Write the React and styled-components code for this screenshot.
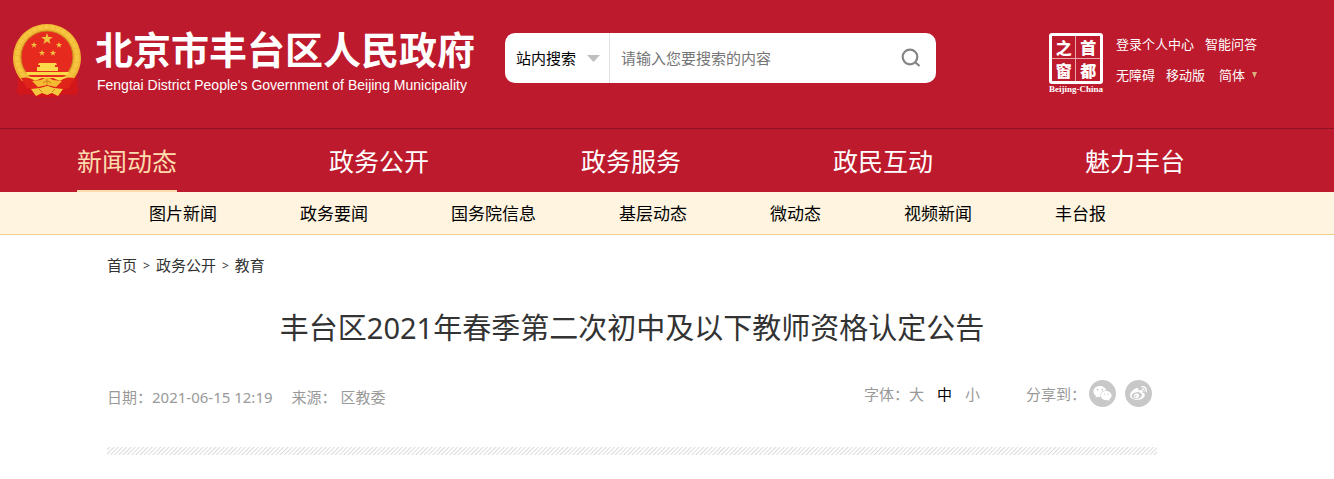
import React, { useState } from "react";
import styled, { createGlobalStyle } from "styled-components";
import { FaWeixin, FaWeibo } from "react-icons/fa";

const GlobalStyle = createGlobalStyle`
  * {
    box-sizing: border-box;
  }

  body {
    margin: 0;
    background: #fff;
    color: #333;
    font-family: "Noto Sans", "Noto Sans CJK SC", sans-serif;
    font-size: 15px;
    line-height: 24px;
  }

  a {
    color: inherit;
    text-decoration: none;
  }

  button, input, select {
    font: inherit;
  }
`;

const Header = styled.header`
  background: #bd1a2d;
  color: #fff;
`;

const HeaderTop = styled.div`
  display: flex;
  align-items: flex-start;
  height: 128px;
  padding: 24px 77px 0 12px;
`;

const Brand = styled.a`
  display: flex;
  flex: none;
  width: 493px;
`;

const BrandText = styled.div`
  margin-left: 12px;
  white-space: nowrap;
`;

const BrandName = styled.div`
  font-family: "Noto Sans CJK SC", sans-serif;
  font-size: 38px;
  font-weight: 700;
  line-height: 48px;
`;

const BrandSub = styled.div`
  padding-left: 2px;
  font-family: "Liberation Sans", sans-serif;
  font-size: 14px;
  line-height: 26px;
`;

const Search = styled.form`
  display: flex;
  align-items: center;
  width: 431px;
  height: 50px;
  margin-top: 9px;
  border-radius: 10px;
  background: #fff;
  overflow: hidden;
`;

const SearchScope = styled.label`
  position: relative;
  flex: none;
  width: 105px;
  height: 50px;
  border-right: 1px solid #e2e2e2;
`;

const ScopeSelect = styled.select`
  appearance: none;
  width: 100%;
  height: 100%;
  padding: 0 0 0 11px;
  border: 0;
  background: transparent;
  color: #000;
  outline: none;
`;

const ScopeArrow = styled.svg`
  position: absolute;
  top: 22px;
  right: 9px;
  pointer-events: none;
`;

const SearchInput = styled.input`
  flex: 1;
  min-width: 0;
  height: 50px;
  padding: 0 11px;
  border: 0;
  outline: none;

  &::placeholder {
    color: #757575;
    opacity: 1;
  }
`;

const SearchButton = styled.button`
  display: flex;
  align-items: center;
  justify-content: center;
  width: 50px;
  height: 50px;
  padding: 0;
  border: 0;
  background: none;
  cursor: pointer;
`;

const Tools = styled.div`
  display: flex;
  margin-left: auto;
`;

const Seal = styled.a`
  width: 58px;
  margin: 9px 11px 0 0;
  text-align: center;
`;

const SealGrid = styled.div`
  display: grid;
  grid-template-columns: 1fr 1fr;
  gap: 1px;
  width: 54px;
  height: 51px;
  margin: 0 auto;
  border: 3px solid #fff;
  border-radius: 3px;
  background: #e9a5ac;
  overflow: hidden;
`;

const SealChar = styled.span`
  background: #bd1a2d;
  font-family: "Noto Sans CJK SC", sans-serif;
  font-size: 16px;
  font-weight: 900;
  line-height: 22px;
`;

const SealCaption = styled.div`
  font-family: "Liberation Serif", serif;
  font-size: 9px;
  font-weight: 700;
  line-height: 10px;
  white-space: nowrap;
`;

const ToolLinks = styled.div`
  display: grid;
  align-content: start;
  gap: 7px;
  padding-top: 8px;
  font-size: 13px;
`;

const ToolRow = styled.div`
  display: flex;
  align-items: center;
  gap: 11px;
  white-space: nowrap;
`;

const LangLink = styled.a`
  display: flex;
  align-items: center;
  gap: 7px;
  padding-left: 3px;
`;

const MainNav = styled.nav`
  display: flex;
  gap: 152px;
  height: 64px;
  padding-left: 77px;
  border-top: 1px solid #8c1322;
`;

const NavLink = styled.a`
  flex: none;
  height: 63px;
  border-bottom: 2px solid ${props => (props.$active ? "#fddcad" : "transparent")};
  color: ${props => (props.$active ? "#fddcad" : "#fff")};
  font-size: 25px;
  line-height: 64px;
`;

const SubNav = styled.nav`
  display: flex;
  gap: 83px;
  height: 43px;
  padding-left: 149px;
  border-bottom: 1px solid #f5d086;
  background: #fef4df;
  color: #000;
  font-size: 17px;
  line-height: 43px;
  white-space: nowrap;
`;

const Main = styled.main`
  padding: 0 177px 24px 107px;
`;

const Crumbs = styled.nav`
  display: flex;
  gap: 6px;
  padding-top: 18px;
`;

const CrumbMark = styled.span`
  font-size: 12px;
  line-height: 26px;
`;

const Title = styled.h1`
  margin: 25px 0 0;
  font-size: 29px;
  font-weight: 400;
  line-height: 48px;
  text-align: center;
`;

const Meta = styled.div`
  display: flex;
  align-items: center;
  height: 27px;
  margin-top: 28px;
  color: #999;
`;

const MetaInfo = styled.div`
  display: flex;
  gap: 19px;
  padding-top: 6px;
`;

const FontSizes = styled.div`
  display: flex;
  gap: 13px;
  margin-left: auto;
`;

const SizeButton = styled.button`
  padding: 0;
  border: 0;
  background: none;
  color: ${props => (props.$active ? "#000" : "#999")};
  cursor: pointer;
`;

const Share = styled.div`
  display: flex;
  align-items: center;
  gap: 9px;
  margin: 0 5px 0 46px;
`;

const ShareLabel = styled.span`
  width: 54px;
  white-space: nowrap;
`;

const ShareButton = styled.button`
  display: flex;
  align-items: center;
  justify-content: center;
  width: 27px;
  height: 27px;
  padding: 0;
  border: 0;
  border-radius: 50%;
  background: #c8c8c8;
  color: #fff;
  cursor: pointer;
`;

const Stripe = styled.div`
  height: 8px;
  margin-top: 40px;
  background: repeating-linear-gradient(
    135deg,
    #fff 0,
    #fff 1px,
    #dcdcdc 2px,
    #fff 3px
  );
`;

const navItems = ["新闻动态", "政务公开", "政务服务", "政民互动", "魅力丰台"];

const subItems = [
  "图片新闻",
  "政务要闻",
  "国务院信息",
  "基层动态",
  "微动态",
  "视频新闻",
  "丰台报"
];

const STAR = "M0-6 1.4-1.9 5.7-1.9 2.3.7 3.5 4.9 0 2.4-3.5 4.9-2.3.7-5.7-1.9-1.4-1.9Z";

const Emblem = () => (
  <svg width="71" height="74" viewBox="0 0 71 74" aria-hidden="true">
    <path
      d="M6 53q4-3 9 0h41q5-3 9 0v10q3 3-1 8l-12-1-7 3H26l-7-3-12 1q-4-5-1-8z"
      fill="#d2161a"
    />
    <path d="M35 0a34 34 0 0 1 25 57l-7 1H17l-7-1A34 34 0 0 1 35 0z" fill="#f0b632" />
    <circle cx="35" cy="33" r="30" fill="none" stroke="#f6c643" strokeWidth="4" strokeDasharray="5 1" />
    <circle cx="35" cy="33" r="26" fill="#e62b1e" stroke="#c98224" />
    <g fill="#efc33f">
      <path d={STAR} transform="translate(35 15)" />
      <path d={STAR} transform="translate(22 21) scale(.55)" />
      <path d={STAR} transform="translate(47 21) scale(.55)" />
      <path d={STAR} transform="translate(30 29) scale(.55)" />
      <path d={STAR} transform="translate(41 29) scale(.55)" />
    </g>
    <path d="M27 39h17l1 2h-2v2h3v4H25v-4h3v-2h-2z" fill="#fbd948" />
    <path d="M14 48h43l-1 3H15zM16 53h39l-2 3H18z" fill="#fbd948" />
    <path d="M9 54q8-2 14 3l7-3h11l7 3q6-5 14-3l-5 10-11 3-10-5-10 5-11-3z" fill="#e02419" />
    <path d="M29 56q6-5 12 0l9 1-6 6-9-2-9 2-6-6z" fill="#f4ba31" />
    <path d="M31 59q4-4 8 0M35 55v6" fill="none" stroke="#d47a1c" />
    <path d="M19 65l9-1 7-2 7 2 9 1-5 7-6-3-5 2-5-2-6 3z" fill="#f5c63e" />
    <path d="M27 65l3 3M43 65l-3 3" stroke="#d47a1c" />
  </svg>
);

const App = () => {
  const [size, setSize] = useState("中");

  return (
    <>
      <GlobalStyle />
      <Header>
        <HeaderTop>
          <Brand href="#">
            <Emblem />
            <BrandText>
              <BrandName>北京市丰台区人民政府</BrandName>
              <BrandSub>
                Fengtai District People's Government of Beijing Municipality
              </BrandSub>
            </BrandText>
          </Brand>
          <Search onSubmit={e => e.preventDefault()}>
            <SearchScope>
              <ScopeSelect aria-label="搜索范围">
                <option>站内搜索</option>
              </ScopeSelect>
              <ScopeArrow width="13" height="7" viewBox="0 0 13 7">
                <path d="M0 0h13L6.500 7z" fill="#bfbfbf" />
              </ScopeArrow>
            </SearchScope>
            <SearchInput aria-label="搜索内容" placeholder="请输入您要搜索的内容" />
            <SearchButton aria-label="搜索">
              <svg width="20" height="20" viewBox="0 0 20 20" fill="none" stroke="#858585" strokeWidth="2.200">
                <circle cx="9" cy="9" r="7.300" />
                <path d="M14 14l4.500 4" />
              </svg>
            </SearchButton>
          </Search>
          <Tools>
            <Seal href="#">
              <SealGrid>
                {["之", "首", "窗", "都"].map(char => (
                  <SealChar key={char}>{char}</SealChar>
                ))}
              </SealGrid>
              <SealCaption>Beijing-China</SealCaption>
            </Seal>
            <ToolLinks>
              <ToolRow>
                <a href="#">登录个人中心</a>
                <a href="#">智能问答</a>
              </ToolRow>
              <ToolRow>
                <a href="#">无障碍</a>
                <a href="#">移动版</a>
                <LangLink href="#">
                  简体
                  <svg width="5" height="6" viewBox="0 0 5 6">
                    <path d="M0 0h5L2.500 6z" fill="#d9b27c" />
                  </svg>
                </LangLink>
              </ToolRow>
            </ToolLinks>
          </Tools>
        </HeaderTop>
        <MainNav>
          {navItems.map((item, i) => (
            <NavLink href="#" key={item} $active={i === 0}>
              {item}
            </NavLink>
          ))}
        </MainNav>
      </Header>
      <SubNav>
        {subItems.map(item => (
          <a href="#" key={item}>
            {item}
          </a>
        ))}
      </SubNav>
      <Main>
        <Crumbs>
          <a href="#">首页</a>
          <CrumbMark>&gt;</CrumbMark>
          <a href="#">政务公开</a>
          <CrumbMark>&gt;</CrumbMark>
          <a href="#">教育</a>
        </Crumbs>
        <Title>丰台区2021年春季第二次初中及以下教师资格认定公告</Title>
        <Meta>
          <MetaInfo>
            <span>日期：2021-06-15 12:19</span>
            <span>来源： 区教委</span>
          </MetaInfo>
          <FontSizes>
            <span>
              字体：
              <SizeButton $active={size === "大"} onClick={() => setSize("大")}>
                大
              </SizeButton>
            </span>
            {["中", "小"].map(item => (
              <SizeButton key={item} $active={size === item} onClick={() => setSize(item)}>
                {item}
              </SizeButton>
            ))}
          </FontSizes>
          <Share>
            <ShareLabel>分享到：</ShareLabel>
            <ShareButton aria-label="微信">
              <FaWeixin size={19} />
            </ShareButton>
            <ShareButton aria-label="微博">
              <FaWeibo size={17} />
            </ShareButton>
          </Share>
        </Meta>
        <Stripe />
      </Main>
    </>
  );
};

export default App;
